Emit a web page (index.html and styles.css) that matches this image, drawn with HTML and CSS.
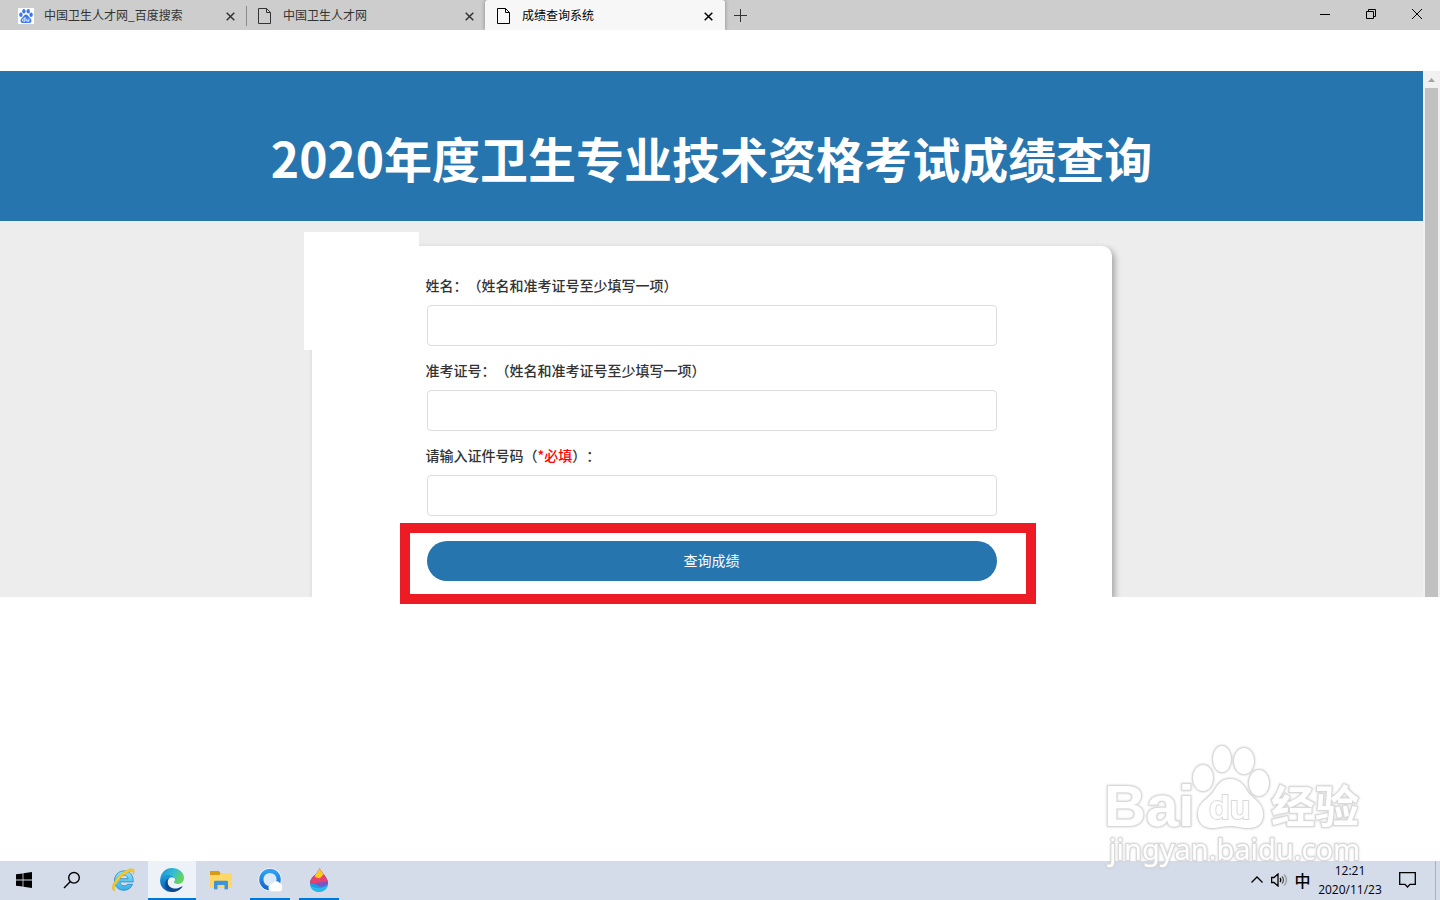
FILE: index.html
```html
<!DOCTYPE html>
<html lang="zh-CN">
<head>
  <meta charset="UTF-8">
  <meta name="viewport" content="width=device-width, initial-scale=1.0">
  <title>成绩查询系统</title>
  <link rel="stylesheet" href="styles.css">
</head>
<body>
  <!-- tabs -->
  <header class="tabbar">
    <div class="tab">
      <svg class="tab-icon" viewBox="0 0 16 16">
        <rect width="16" height="16" fill="#fff"/>
        <g fill="#3b78ee">
          <ellipse cx="2.9" cy="6.7" rx="1.7" ry="2.2"/>
          <ellipse cx="5.9" cy="3.2" rx="1.7" ry="2.2"/>
          <ellipse cx="10.2" cy="3.2" rx="1.7" ry="2.2"/>
          <ellipse cx="13.1" cy="6.7" rx="1.7" ry="2.2"/>
          <path d="M8 6.6c1.6 0 2.3 1.7 3.5 2.8 1.3 1.100 2.200 2.200 1.900 3.800-.3 1.700-1.900 2.100-5.400 1.700-3.500.4-5.100 0-5.400-1.700-.3-1.600.6-2.700 1.900-3.800C5.700 8.300 6.400 6.600 8 6.600z"/>
        </g>
        <path d="M7 9v4.200H5.600a1 1 0 0 1 0-2.300H7M8.800 10.700v2.500h2.200v-2.500" fill="none" stroke="#fff" stroke-width=".9"/>
      </svg>
      <span class="tab-title">中国卫生人才网_百度搜索</span>
      <button class="tab-close" aria-label="关闭标签页"><svg viewBox="0 0 9 9"><path d="M.7.7l7.600 7.600M8.300.7L.7 8.300"/></svg></button>
    </div>
    <div class="tab tab-split">
      <svg class="tab-icon" viewBox="0 0 16 16"><path d="M1.500.5h8l4 4v11h-12zM9.500.5v4h4" fill="none" stroke="currentColor"/></svg>
      <span class="tab-title">中国卫生人才网</span>
      <button class="tab-close" aria-label="关闭标签页"><svg viewBox="0 0 9 9"><path d="M.7.7l7.600 7.600M8.300.7L.7 8.300"/></svg></button>
    </div>
    <div class="tab active">
      <svg class="tab-icon" viewBox="0 0 16 16"><path d="M1.500.5h8l4 4v11h-12zM9.500.5v4h4" fill="none" stroke="currentColor"/></svg>
      <span class="tab-title">成绩查询系统</span>
      <button class="tab-close" aria-label="关闭标签页"><svg viewBox="0 0 9 9"><path d="M.7.7l7.600 7.600M8.300.7L.7 8.300"/></svg></button>
    </div>
    <button class="new-tab" aria-label="新建标签页"><svg viewBox="0 0 13 13"><path d="M6.500 0v13M0 6.500h13"/></svg></button>
    <div class="window-buttons">
      <button aria-label="最小化"><svg viewBox="0 0 10 10"><path d="M0 5.500h10"/></svg></button>
      <button aria-label="还原"><svg viewBox="0 0 10 10"><path d="M.5 2.500h7v7h-7zM2.500 2.500v-2h7v7h-2"/></svg></button>
      <button aria-label="关闭"><svg viewBox="0 0 10 10"><path d="M0 0l10 10M10 0L0 10"/></svg></button>
    </div>
  </header>

  <!-- page -->
  <div class="viewport">
    <main class="page">
      <div class="banner">
        <h1>2020年度卫生专业技术资格考试成绩查询</h1>
      </div>
      <div class="content">
        <div class="card">
          <div class="patch"></div>
          <form class="query-form" onsubmit="return false">
            <label for="name">姓名：（姓名和准考证号至少填写一项）</label>
            <input type="text" id="name">
            <label for="ticket">准考证号：（姓名和准考证号至少填写一项）</label>
            <input type="text" id="ticket">
            <label for="idcard">请输入证件号码（<span class="required">*必填</span>）：</label>
            <input type="text" id="idcard">
            <div class="submit-row">
              <button class="submit" type="submit">查询成绩</button>
              <div class="highlight"></div>
            </div>
          </form>
        </div>
      </div>
    </main>
    <div class="scrollbar">
      <svg class="scroll-arrow" viewBox="0 0 7 4"><path d="M0 4L3.500 0 7 4z"/></svg>
      <div class="scroll-thumb"></div>
    </div>
  </div>

  <div class="blank"></div>

  <!-- taskbar -->
  <footer class="taskbar">
    <button class="task" aria-label="开始">
      <svg width="16" height="16" viewBox="0 0 16 16"><path d="M0 2.300L6.600 1.400v6.200H0zM7.400 1.300L16 0v7.600H7.400zM0 8.400h6.600v6.200L0 13.700zM7.400 8.400H16V16l-8.600-1.300z"/></svg>
    </button>
    <button class="task" aria-label="搜索">
      <svg width="18" height="18" viewBox="0 0 18 18" fill="none" stroke="#000" stroke-width="1.400"><circle cx="11" cy="6.800" r="5.300"/><path d="M7.200 10.700L1 17"/></svg>
    </button>
    <div class="task-apps">
      <button class="task" aria-label="Internet Explorer">
        <svg width="24" height="24" viewBox="0 0 24 24">
          <defs><linearGradient id="ie" x1="0" y1="0" x2="0" y2="1"><stop offset="0" stop-color="#8be3fa"/><stop offset="1" stop-color="#36aee6"/></linearGradient></defs>
          <path d="M21.500 16.300c-1.300 3.700-4.600 6-8.500 6-5.600 0-9.600-4-9.600-9.500S7.500 2.900 13 2.900c5.800 0 9.400 4.300 9.200 11H8.900c.2 2.300 1.900 3.900 4.300 3.900 1.500 0 2.700-.5 3.300-1.500zM9 10.700h8c-.3-2.200-1.900-3.600-3.900-3.600-2.200 0-3.700 1.300-4.100 3.600z" fill="url(#ie)" stroke="#2389c4" stroke-width=".8"/>
          <path d="M4 23C-1.500 21.500 2 14 8.500 7.500 14 2.200 21-.8 22.800 1.800c.8 1.200.2 3.200-.8 4.800.3-1.600.2-2.600-.8-3C18.600 2.800 13.400 5.800 9.300 10.200 4.600 15.200 1.800 21.400 4 23z" fill="#fbc925" stroke="#dfa514" stroke-width=".4"/>
        </svg>
      </button>
      <button class="task current" aria-label="Microsoft Edge">
        <svg width="24" height="24" viewBox="0 0 24 24">
          <defs>
            <linearGradient id="edgeTop" x1="0" y1="0" x2="1" y2=".5"><stop offset="0" stop-color="#168bd5"/><stop offset=".55" stop-color="#33bdd5"/><stop offset="1" stop-color="#66d45a"/></linearGradient>
            <linearGradient id="edgeLow" x1="0" y1="0" x2="0" y2="1"><stop offset="0" stop-color="#1a9bde"/><stop offset="1" stop-color="#0c5cae"/></linearGradient>
          </defs>
          <path d="M.2 11C.9 4.600 5.800 0 12 0c7 0 12 4.700 12 9.800 0 3.700-2.600 6.100-6 6.100-2.900 0-4-.9-4-1.800 0-.7 1-1.100 1-2.600 0-2.100-2-4-5-4C5.500 7.500 1 9 .2 11z" fill="url(#edgeTop)"/>
          <path d="M.1 12C.4 8.500 4 6.600 8 6.700c3.700.1 6.600 2 7 4.500-.5-1.200-1.700-1.900-3.100-1.900-2.300 0-4.200 2-4.200 4.900 0 4.300 3.400 8 8.300 8.700-1.200.7-2.600 1.100-4.100 1.100C5 24-.3 18.500.1 12z" fill="url(#edgeLow)"/>
          <path d="M9.500 10.200c-3 2-2.700 6.500 1 9 3.500 2.300 7.700 1.300 11.200-.8.600-.3 1 .1.600.7C20 22.300 16.700 24 13.300 23.900c-5.400-.3-8.800-4.200-8.200-8.500.3-2.400 2-4.400 4.400-5.200z" fill="#0b4a91"/>
        </svg>
      </button>
      <button class="task" aria-label="文件资源管理器">
        <svg width="22" height="20" viewBox="0 0 22 20">
          <path d="M0 1.500Q0 1 .5 1H9l1.500 2v4H0z" fill="#d99a12"/>
          <path d="M0 5h9.500l1.500-2h10q.7 0 .7.700V18H0z" fill="#ffd766"/>
          <path d="M4 18.500V12q0-1.200 1.200-1.200h11.600q1.200 0 1.200 1.200v6.500h-3.500V15h-7v3.500z" fill="#3b94dc"/>
          <path d="M4 18.500h3.500v.7H4zM14.500 18.500H18v.7h-3.500z" fill="#1c72b7"/>
        </svg>
      </button>
      <button class="task running" aria-label="QQ浏览器">
        <svg width="24" height="24" viewBox="0 0 24 24">
          <defs><linearGradient id="qq" x1="0" y1="0" x2="0" y2="1"><stop offset="0" stop-color="#2fa0f5"/><stop offset="1" stop-color="#1668cb"/></linearGradient></defs>
          <circle cx="12" cy="11.500" r="11.500" fill="#fff"/>
          <circle cx="12" cy="11.500" r="8.700" fill="#dce9f5" stroke="url(#qq)" stroke-width="4.200"/>
          <path d="M14 23.500a3.800 3.800 0 0 1-.3-7.500 4.900 4.900 0 0 1 8.600-.3 4 4 0 0 1-.5 7.800z" fill="#fff" stroke="#d7e5f3" stroke-width=".4"/>
        </svg>
      </button>
      <button class="task running" aria-label="画图 3D">
        <svg width="20" height="24" viewBox="0 0 20 24">
          <defs><clipPath id="drop"><path d="M10.500 0c1 4 8.500 8.800 8.500 15.200 0 4.900-4 8.800-9 8.800s-9-3.900-9-8.800C1 8.700 9.500 6 10.500 0z"/></clipPath></defs>
          <g clip-path="url(#drop)">
            <path d="M0 0h20v24H0z" fill="#1e9de3"/>
            <path d="M0 0h20v15c-3 4-9 5-12 2-2-1.600-5-2-8-1z" fill="#7956c7"/>
            <path d="M0 0h20v10c-2 5-7 4-10 4.500S4 17 0 14z" fill="#e5426f"/>
            <path d="M7 0h8v6c-2 1-2 3-4 4S8 9 6 9z" fill="#ffca19"/>
            <path d="M0 17c6 3 12 6 20-1v5c-6 4-15 4-20 0z" fill="#28b8e9"/>
          </g>
        </svg>
      </button>
    </div>
    <div class="tray">
      <button class="tray-item" aria-label="显示隐藏的图标"><svg width="12" height="7" viewBox="0 0 12 7"><path d="M.5 6.500L6 1l5.500 5.500"/></svg></button>
      <button class="tray-item" aria-label="音量"><svg width="17" height="14" viewBox="0 0 17 14"><path d="M.6 4.500h2.400l4-3.500v12l-4-3.500H.6zM9 5q1.500 2 0 4"/><path d="M11 3.300q3 3.700 0 7.400" stroke="#555"/><path d="M13.200 1.500q4.600 5.500 0 11" stroke="#999"/></svg></button>
      <button class="tray-item ime">中</button>
      <time class="clock">12:21<br>2020/11/23</time>
      <button class="notice" aria-label="通知"><svg width="17" height="16" viewBox="0 0 17 16"><path d="M.7.7h15.600v11.600h-5.300L8.500 15 6 12.300H.7z"/></svg></button>
      <div class="show-desktop"></div>
    </div>
  </footer>

  <!-- watermark -->
  <svg class="watermark" width="270" height="130" viewBox="0 0 270 130">
    <g class="mark">
      <text class="mark-latin" x="4" y="86">Bai</text>
      <ellipse cx="103" cy="38" rx="10" ry="13"/>
      <ellipse cx="122" cy="19" rx="9" ry="13"/>
      <ellipse cx="144" cy="21" rx="10" ry="13"/>
      <ellipse cx="159" cy="43" rx="10" ry="13"/>
      <path d="M130 39c9 0 14 6 17 12 4 7 16 11 16 23 0 11-7 14-15 14-7 0-10-2-18-2s-11 2-18 2c-8 0-14-5-14-14 0-12 11-15 16-23 4-7 8-12 16-12z"/>
      <text class="mark-du" x="109" y="79">du</text>
      <text class="mark-cjk" x="171" y="83">经验</text>
      <text class="mark-url" x="9" y="120">jingyan.baidu.com</text>
    </g>
  </svg>
</body>
</html>
```

FILE: styles.css
```css
* {
  box-sizing: border-box;
}

body {
  margin: 0;
  min-height: 100vh;
  display: flex;
  flex-direction: column;
  position: relative;
  background-color: #fff;
  font-family: "Noto Sans CJK SC", sans-serif;
  font-size: 14px;
  color: #333;
  text-spacing-trim: space-all;
}

button {
  border: 0;
  padding: 0;
  background: none;
  font-family: inherit;
  color: inherit;
}

/* tabs */
.tabbar {
  display: flex;
  height: 30px;
  padding-left: 7px;
  background-color: #cdcdcd;
}

.tab {
  display: flex;
  align-items: center;
  position: relative;
  width: 239px;
  height: 30px;
  padding: 2px 11px 0;
  font-size: 12px;
}
.tab.active {
  width: 240px;
  padding-right: 12px;
  background-color: #f7f7f7;
  border-radius: 3px 3px 0 0;
  box-shadow: 0 0 4px rgba(0, 0, 0, 0.35);
  color: #000;
  clip-path: inset(0 -6px);
}
.tab-split::before {
  content: "";
  position: absolute;
  left: 0;
  top: 6px;
  width: 1px;
  height: 20px;
  background-color: #8a8a8a;
}
.tab-icon {
  width: 16px;
  height: 16px;
  margin-right: 10px;
}
.tab-title {
  flex: 1;
  padding-bottom: 2px;
  line-height: 18px;
  white-space: nowrap;
}
.tab-close {
  display: flex;
  width: 9px;
  height: 9px;
}
.tab-close svg {
  width: 9px;
  height: 9px;
  stroke: currentColor;
  stroke-width: 1.5;
}

.new-tab {
  display: flex;
  align-items: center;
  justify-content: center;
  width: 31px;
}
.new-tab svg {
  width: 13px;
  height: 13px;
  stroke: #333;
}

.window-buttons {
  display: flex;
  margin-left: auto;
}
.window-buttons button {
  display: flex;
  justify-content: center;
  width: 46px;
  padding-top: 9px;
}
.window-buttons svg {
  width: 10px;
  height: 10px;
  fill: none;
  stroke: #000;
}

/* page */
.viewport {
  display: flex;
  margin-top: 41px;
}
.page {
  flex: 1;
}

.banner {
  padding: 56px 0 34px;
  background-color: #2775ae;
  text-align: center;
}
.banner h1 {
  margin: 0;
  font-size: 48px;
  line-height: 60px;
  font-weight: bold;
  color: #fff;
}

.content {
  padding: 25px 20px 0;
  background-color: #ededed;
}
.card {
  position: relative;
  max-width: 800px;
  margin: 0 auto;
  padding: 29px 20px 16px;
  background-color: #fff;
  border-radius: 10px 10px 0 0;
  box-shadow: 3px 3px 6px rgba(0, 0, 0, 0.3);
}
.patch {
  position: absolute;
  left: -8px;
  top: -14px;
  width: 115px;
  height: 118px;
  background-color: #fff;
}

.query-form {
  display: flex;
  flex-direction: column;
  max-width: 572px;
  margin: 0 auto;
}
.query-form label {
  line-height: 20px;
  font-weight: 500;
}
.query-form input {
  height: 41px;
  margin: 10px 1px 14px;
  padding: 0 12px;
  border: 1px solid #ddd;
  border-radius: 4px;
  font-size: 14px;
}
.required {
  color: #f00;
}

.submit-row {
  position: relative;
  margin: 11px 1px 0;
}
.submit {
  display: block;
  width: 100%;
  height: 40px;
  padding-bottom: 2px;
  border-radius: 20px;
  background-color: #2775ae;
  font-size: 14px;
  color: #fff;
}
.highlight {
  position: absolute;
  z-index: 2;
  top: -18px;
  right: -39px;
  bottom: -23px;
  left: -27px;
  border: 10px solid #ed1c24;
  pointer-events: none;
}

.scrollbar {
  display: flex;
  flex-direction: column;
  align-items: center;
  position: relative;
  width: 17px;
  background-color: #f1f1f1;
}
.scroll-arrow {
  width: 7px;
  height: 4px;
  margin: 7px 0 6px;
  fill: #a3a3a3;
}
.scroll-thumb {
  flex: 1;
  width: 13px;
  background-color: #c1c1c1;
}

.blank {
  flex: 1;
  position: relative;
  z-index: 1;
  background-color: #fff;
}

/* taskbar */
.taskbar {
  display: flex;
  position: relative;
  z-index: 1;
  height: 39px;
  background-color: #d4dbe9;
  color: #000;
}
.task {
  display: flex;
  align-items: center;
  justify-content: center;
  position: relative;
  width: 48px;
  height: 39px;
  padding-bottom: 2px;
}
.task-apps {
  display: flex;
  gap: 1px;
  margin-left: 3px;
}
.task.current {
  background-color: #edf1f8;
}
.task.current::after,
.task.running::after {
  content: "";
  position: absolute;
  left: 4px;
  right: 4px;
  bottom: 0;
  height: 2px;
  background-color: #0078d7;
}
.task.current::after {
  left: 0;
  right: 0;
}

.tray {
  display: flex;
  align-items: center;
  height: 37px;
  margin-left: auto;
}
.tray svg {
  fill: none;
  stroke: #000;
  stroke-width: 1.3;
}
.tray-item {
  display: flex;
  align-items: center;
  justify-content: center;
  width: 23px;
  height: 37px;
}
.ime {
  font-size: 16px;
  font-weight: 500;
}
.clock {
  width: 72px;
  text-align: center;
  font-family: "Open Sans", sans-serif;
  font-size: 12px;
  line-height: 19px;
}
.notice {
  display: flex;
  justify-content: center;
  width: 42px;
}
.show-desktop {
  align-self: flex-start;
  width: 5px;
  height: 39px;
  margin-left: 7px;
  border-left: 1px solid #a9b1bf;
}

/* watermark */
.watermark {
  position: absolute;
  z-index: 3;
  right: 70px;
  bottom: 30px;
  pointer-events: none;
}
.mark {
  fill: #fff;
  stroke: #d9d9d9;
  stroke-width: 2;
  paint-order: stroke;
  filter: drop-shadow(0 0 1px #ccc);
}
.mark-latin {
  font-family: "Liberation Sans", sans-serif;
  font-size: 58px;
  font-weight: bold;
}
.mark-du {
  font-family: "Liberation Sans", sans-serif;
  font-size: 34px;
  font-weight: bold;
}
.mark-cjk {
  font-family: "Noto Sans CJK SC", sans-serif;
  font-size: 44px;
  font-weight: bold;
}
.mark-url {
  font-family: "Noto Sans", sans-serif;
  font-size: 29px;
}
```
